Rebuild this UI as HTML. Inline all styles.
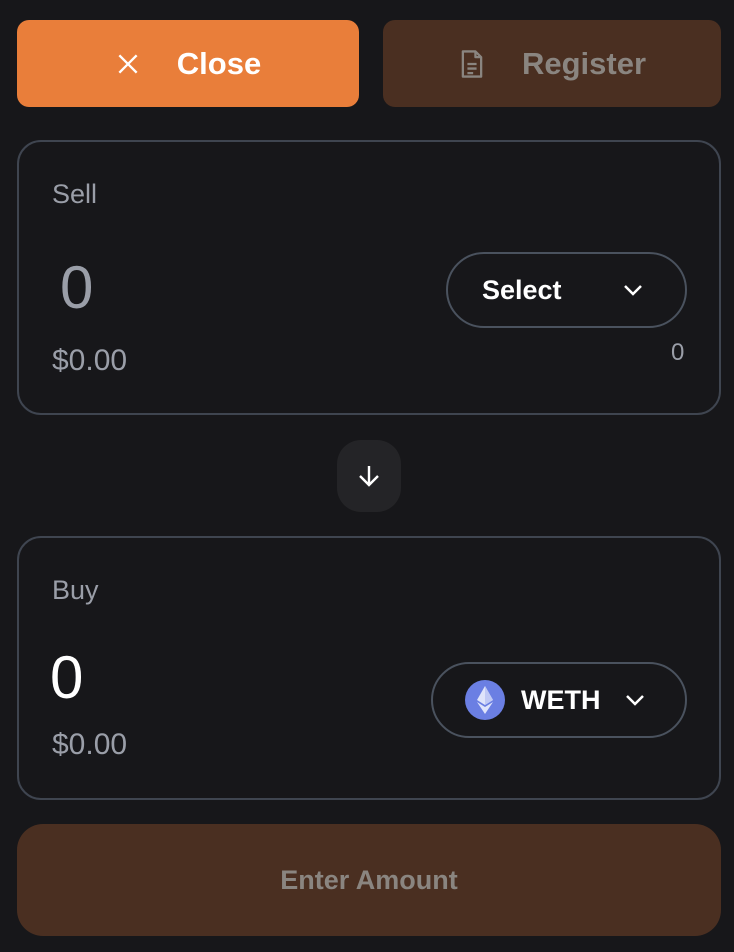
<!DOCTYPE html>
<html><head><style>
*{box-sizing:border-box;margin:0;padding:0}
body{width:734px;height:952px;background:#17171a;font-family:"Liberation Sans",sans-serif;position:relative;overflow:hidden}
.abs{position:absolute}
.btn{border-radius:12px;display:flex;align-items:center;justify-content:center;font-weight:bold;font-size:31px}
.card{border:2px solid #3f4550;border-radius:24px}
.pill{border:2px solid #4a525e;border-radius:38px;display:flex;align-items:center;color:#fff;font-weight:bold;font-size:27px}
</style></head><body>
<div class="abs btn" style="left:17px;top:20px;width:342px;height:87px;background:#e97e3a;color:#fff">
<svg width="26" height="26" viewBox="0 0 24 24" style="margin-right:36px"><path d="M4 4L20 20M20 4L4 20" stroke="#fff" stroke-width="2.2" fill="none"/></svg>Close</div>
<div class="abs btn" style="left:383px;top:20px;width:338px;height:87px;background:#4a2f21;color:#8a8580">
<svg width="28" height="32" viewBox="0 0 24 28" style="margin-right:36px"><path d="M4 3h11l5 5v17H4z M15 3v5h5 M8 14h8 M8 18h8 M8 22h5" stroke="#8a8580" stroke-width="2" fill="none" stroke-linejoin="round"/></svg>Register</div>

<div class="abs card" style="left:17px;top:140px;width:704px;height:275px"></div>
<div class="abs" style="left:52px;top:179px;color:#9a9ea8;font-size:27px">Sell</div>
<div class="abs" style="left:60px;top:253px;color:#9a9ea8;font-size:60px">0</div>
<div class="abs" style="left:52px;top:344px;color:#9a9ea8;font-size:30px">$0.00</div>
<div class="abs pill" style="left:446px;top:252px;width:241px;height:76px;padding-left:34px">Select
<svg width="22" height="14" viewBox="0 0 22 14" style="margin-left:60px"><path d="M3 3l8 8 8-8" stroke="#fff" stroke-width="2.5" fill="none"/></svg></div>
<div class="abs" style="left:671px;top:339px;color:#9a9ea8;font-size:24px">0</div>

<div class="abs" style="left:337px;top:440px;width:64px;height:72px;border-radius:24px;background:#242427;display:flex;align-items:center;justify-content:center">
<svg width="24" height="26" viewBox="0 0 24 26"><path d="M12 3v19M3 13l9 9 9-9" stroke="#fff" stroke-width="2.4" fill="none"/></svg></div>

<div class="abs card" style="left:17px;top:536px;width:704px;height:264px"></div>
<div class="abs" style="left:52px;top:575px;color:#9a9ea8;font-size:27px">Buy</div>
<div class="abs" style="left:50px;top:643px;color:#fff;font-size:60px">0</div>
<div class="abs" style="left:52px;top:728px;color:#9a9ea8;font-size:30px">$0.00</div>
<div class="abs pill" style="left:431px;top:662px;width:256px;height:76px;padding-left:32px">
<svg width="40" height="40" viewBox="0 0 40 40" style="margin-right:16px"><circle cx="20" cy="20" r="20" fill="#6b7fe3"/><path d="M20 6l-8 14 8 5 8-5z" fill="#dfe4fb"/><path d="M20 6v19l8-5z" fill="#c0c9f5"/><path d="M12 22l8 12 8-12-8 5z" fill="#dfe4fb"/></svg>WETH
<svg width="22" height="14" viewBox="0 0 22 14" style="margin-left:24px"><path d="M3 3l8 8 8-8" stroke="#fff" stroke-width="2.5" fill="none"/></svg></div>

<div class="abs btn" style="left:17px;top:824px;width:704px;height:112px;border-radius:26px;background:#4a2f21;color:#8a8580;font-size:27px">Enter Amount</div>
</body></html>
